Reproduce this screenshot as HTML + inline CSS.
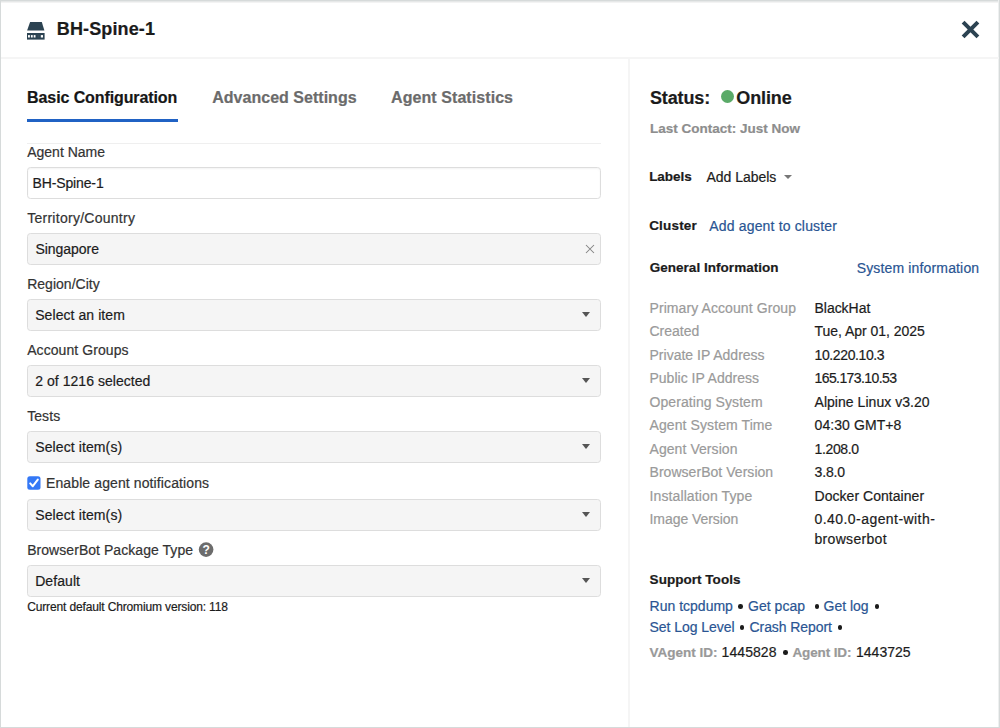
<!DOCTYPE html>
<html><head><meta charset="utf-8"><title>BH-Spine-1</title>
<style>
html,body{margin:0;padding:0;background:#fff;}
body{width:1000px;height:728px;position:relative;overflow:hidden;font-family:"Liberation Sans",sans-serif;}
.t{position:absolute;white-space:nowrap;-webkit-text-stroke:0.2px currentColor;}
</style></head><body>
<div style="position:absolute;left:0;top:0;width:1000px;height:1px;background:#d6dada"></div>
<div style="position:absolute;left:0;top:1px;width:1000px;height:1px;background:#e6e8e8"></div>
<div style="position:absolute;left:0;top:2px;width:1000px;height:1px;background:#f3f3f3"></div>
<div style="position:absolute;left:0;top:0;width:1px;height:728px;background:#d6dada"></div>
<div style="position:absolute;left:999px;top:0;width:1px;height:728px;background:#d6dada"></div>
<div style="position:absolute;left:998px;top:0;width:1px;height:728px;background:#eef0f0"></div>
<div style="position:absolute;left:0;top:727px;width:1000px;height:1px;background:#d6dada"></div>
<div style="position:absolute;left:1px;top:57px;width:998px;height:2px;background:#f5f5f5"></div>
<div style="position:absolute;left:628px;top:59px;width:2px;height:668px;background:#f5f5f5"></div>
<svg style="position:absolute;left:24px;top:18px" width="24" height="24" viewBox="0 0 24 24">
<path d="M6.1 4 H17.8 L20.4 12.5 H3.1 Z" fill="#2c4352"/>
<rect x="3" y="15" width="17.6" height="6.6" fill="#2c4352"/>
<rect x="4" y="17.1" width="1.9" height="2.4" fill="#fff"/><rect x="6.9" y="17.1" width="1.8" height="2.4" fill="#fff"/><rect x="9.7" y="17.1" width="1.8" height="2.4" fill="#fff"/>
<rect x="13.5" y="17.1" width="2" height="2.4" fill="#fff" opacity="0.06"/>
<rect x="16.8" y="17.1" width="2.2" height="2.4" fill="#fff"/>
</svg>
<div class="t" style="left:56.75px;top:17.00px;font-size:18px;line-height:25px;color:#1b1b1b;font-weight:bold;letter-spacing:0.139px;">BH-Spine-1</div>
<svg style="position:absolute;left:961px;top:20px" width="19" height="19" viewBox="0 0 19 19">
<path d="M2.1 2.1 L16.9 16.9 M16.9 2.1 L2.1 16.9" stroke="#2c4352" stroke-width="4" stroke-linecap="butt"/>
</svg>
<div class="t" style="left:27.10px;top:87.00px;font-size:16px;line-height:22px;color:#161616;font-weight:bold;letter-spacing:-0.100px;">Basic Configuration</div>
<div class="t" style="left:212.20px;top:87.00px;font-size:16px;line-height:22px;color:#6b6b6b;font-weight:bold;letter-spacing:0.025px;">Advanced Settings</div>
<div class="t" style="left:391.10px;top:87.00px;font-size:16px;line-height:22px;color:#6b6b6b;font-weight:bold;letter-spacing:0.067px;">Agent Statistics</div>
<div style="position:absolute;left:27px;top:119px;width:151px;height:3px;background:#2062c4"></div>
<div style="position:absolute;left:27px;top:143px;width:574px;height:1px;background:#efefef"></div>
<div class="t" style="left:27.20px;top:142.00px;font-size:14px;line-height:20px;color:#333;">Agent Name</div>
<div style="position:absolute;left:27px;top:167px;width:572px;height:29.5px;border:1px solid #dddddd;border-radius:3.5px;background:#fff;box-shadow:inset 0 1px 2px rgba(0,0,0,0.05);"></div>
<div class="t" style="left:32.60px;top:173.00px;font-size:14px;line-height:20px;color:#1c1c1c;letter-spacing:-0.144px;">BH-Spine-1</div>
<div class="t" style="left:27.20px;top:208.00px;font-size:14px;line-height:20px;color:#333;letter-spacing:0.269px;">Territory/Country</div>
<div style="position:absolute;left:27px;top:233px;width:572px;height:29.5px;border:1px solid #dddddd;border-radius:3.5px;background:#f5f5f5;"></div>
<svg style="position:absolute;left:585px;top:244px" width="10" height="10" viewBox="0 0 10 10"><path d="M1 1 L9 9 M9 1 L1 9" stroke="#808080" stroke-width="1.05"/></svg>
<div class="t" style="left:35.50px;top:239.00px;font-size:14px;line-height:20px;color:#1c1c1c;letter-spacing:-0.050px;">Singapore</div>
<div class="t" style="left:27.20px;top:274.00px;font-size:14px;line-height:20px;color:#333;letter-spacing:0.020px;">Region/City</div>
<div style="position:absolute;left:27px;top:299px;width:572px;height:29.5px;border:1px solid #dddddd;border-radius:3.5px;background:#f5f5f5;"></div>
<div style="position:absolute;left:582px;top:312px;width:0;height:0;border-left:4.5px solid transparent;border-right:4.5px solid transparent;border-top:5px solid #555"></div>
<div class="t" style="left:35.20px;top:305.00px;font-size:14px;line-height:20px;color:#1c1c1c;letter-spacing:0.069px;">Select an item</div>
<div class="t" style="left:27.20px;top:340.00px;font-size:14px;line-height:20px;color:#333;letter-spacing:0.077px;">Account Groups</div>
<div style="position:absolute;left:27px;top:365px;width:572px;height:29.5px;border:1px solid #dddddd;border-radius:3.5px;background:#f5f5f5;"></div>
<div style="position:absolute;left:582px;top:378px;width:0;height:0;border-left:4.5px solid transparent;border-right:4.5px solid transparent;border-top:5px solid #555"></div>
<div class="t" style="left:35.20px;top:371.00px;font-size:14px;line-height:20px;color:#1c1c1c;letter-spacing:0.047px;">2 of 1216 selected</div>
<div class="t" style="left:27.20px;top:406.00px;font-size:14px;line-height:20px;color:#333;letter-spacing:0.075px;">Tests</div>
<div style="position:absolute;left:27px;top:431px;width:572px;height:29.5px;border:1px solid #dddddd;border-radius:3.5px;background:#f5f5f5;"></div>
<div style="position:absolute;left:582px;top:444px;width:0;height:0;border-left:4.5px solid transparent;border-right:4.5px solid transparent;border-top:5px solid #555"></div>
<div class="t" style="left:35.20px;top:437.00px;font-size:14px;line-height:20px;color:#1c1c1c;letter-spacing:0.108px;">Select item(s)</div>
<svg style="position:absolute;left:27px;top:476px" width="14" height="14" viewBox="0 0 14 14"><rect x="0.3" y="0.3" width="13.2" height="13.4" rx="2.5" fill="#3478f6"/><path d="M3.2 7.4 L5.8 10.2 L10.8 3.6" stroke="#fff" stroke-width="2" fill="none" stroke-linecap="round" stroke-linejoin="round"/></svg>
<div class="t" style="left:46.00px;top:473.00px;font-size:14px;line-height:20px;color:#333;letter-spacing:0.108px;">Enable agent notifications</div>
<div style="position:absolute;left:27px;top:499px;width:572px;height:29.5px;border:1px solid #dddddd;border-radius:3.5px;background:#f5f5f5;"></div>
<div style="position:absolute;left:582px;top:512px;width:0;height:0;border-left:4.5px solid transparent;border-right:4.5px solid transparent;border-top:5px solid #555"></div>
<div class="t" style="left:35.20px;top:505.00px;font-size:14px;line-height:20px;color:#1c1c1c;letter-spacing:0.108px;">Select item(s)</div>
<div class="t" style="left:27.20px;top:540.00px;font-size:14px;line-height:20px;color:#333;letter-spacing:0.050px;">BrowserBot Package Type</div>
<svg style="position:absolute;left:198px;top:541px" width="16" height="17" viewBox="0 0 16 17"><circle cx="8.1" cy="8.6" r="7.3" fill="#6c6c6c"/><text x="8.1" y="12.8" text-anchor="middle" font-family="Liberation Sans" font-weight="bold" font-size="12" fill="#fff">?</text></svg>
<div style="position:absolute;left:27px;top:565px;width:572px;height:29.5px;border:1px solid #dddddd;border-radius:3.5px;background:#f5f5f5;"></div>
<div style="position:absolute;left:582px;top:578px;width:0;height:0;border-left:4.5px solid transparent;border-right:4.5px solid transparent;border-top:5px solid #555"></div>
<div class="t" style="left:35.20px;top:571.00px;font-size:14px;line-height:20px;color:#1c1c1c;letter-spacing:0.067px;">Default</div>
<div class="t" style="left:27.20px;top:599.00px;font-size:12px;line-height:17px;color:#1c1c1c;letter-spacing:-0.142px;">Current default Chromium version: 118</div>
<div class="t" style="left:649.90px;top:86.00px;font-size:18px;line-height:25px;color:#1b1b1b;font-weight:bold;letter-spacing:-0.117px;">Status:</div>
<div style="position:absolute;left:721px;top:89.8px;width:13px;height:13px;border-radius:50%;background:#5aaa68"></div>
<div class="t" style="left:736.30px;top:86.00px;font-size:18px;line-height:25px;color:#1b1b1b;font-weight:bold;letter-spacing:-0.120px;">Online</div>
<div class="t" style="left:649.90px;top:119.00px;font-size:13.5px;line-height:19px;color:#8d8d8d;font-weight:bold;">Last Contact: Just Now</div>
<div class="t" style="left:649.20px;top:167.00px;font-size:13.5px;line-height:19px;color:#1b1b1b;font-weight:bold;letter-spacing:-0.060px;">Labels</div>
<div class="t" style="left:706.40px;top:167.00px;font-size:14px;line-height:20px;color:#1c1c1c;letter-spacing:-0.011px;">Add Labels</div>
<div style="position:absolute;left:783.5px;top:174.5px;width:0;height:0;border-left:4.5px solid transparent;border-right:4.5px solid transparent;border-top:4.5px solid #777"></div>
<div class="t" style="left:649.20px;top:216.00px;font-size:13.5px;line-height:19px;color:#1b1b1b;font-weight:bold;letter-spacing:0.183px;">Cluster</div>
<div class="t" style="left:709.30px;top:216.00px;font-size:14px;line-height:20px;color:#2a5593;letter-spacing:0.163px;">Add agent to cluster</div>
<div class="t" style="left:649.70px;top:258.00px;font-size:13.5px;line-height:19px;color:#1b1b1b;font-weight:bold;letter-spacing:0.033px;">General Information</div>
<div class="t" style="left:856.70px;top:258.00px;font-size:14px;line-height:20px;color:#2a5593;letter-spacing:0.153px;">System information</div>
<div class="t" style="left:649.50px;top:298.00px;font-size:14px;line-height:20px;color:#9a9a9a;letter-spacing:0.085px;">Primary Account Group</div>
<div class="t" style="left:814.50px;top:298.00px;font-size:14px;line-height:20px;color:#1c1c1c;letter-spacing:-0.029px;">BlackHat</div>
<div class="t" style="left:649.50px;top:321.00px;font-size:14px;line-height:20px;color:#9a9a9a;">Created</div>
<div class="t" style="left:814.50px;top:321.00px;font-size:14px;line-height:20px;color:#1c1c1c;letter-spacing:-0.031px;">Tue, Apr 01, 2025</div>
<div class="t" style="left:649.50px;top:345.00px;font-size:14px;line-height:20px;color:#9a9a9a;letter-spacing:0.012px;">Private IP Address</div>
<div class="t" style="left:814.50px;top:345.00px;font-size:14px;line-height:20px;color:#1c1c1c;letter-spacing:-0.380px;">10.220.10.3</div>
<div class="t" style="left:649.50px;top:368.00px;font-size:14px;line-height:20px;color:#9a9a9a;">Public IP Address</div>
<div class="t" style="left:814.50px;top:368.00px;font-size:14px;line-height:20px;color:#1c1c1c;letter-spacing:-0.583px;">165.173.10.53</div>
<div class="t" style="left:649.50px;top:392.00px;font-size:14px;line-height:20px;color:#9a9a9a;letter-spacing:0.073px;">Operating System</div>
<div class="t" style="left:814.50px;top:392.00px;font-size:14px;line-height:20px;color:#1c1c1c;letter-spacing:0.041px;">Alpine Linux v3.20</div>
<div class="t" style="left:649.50px;top:415.00px;font-size:14px;line-height:20px;color:#9a9a9a;letter-spacing:0.094px;">Agent System Time</div>
<div class="t" style="left:814.50px;top:415.00px;font-size:14px;line-height:20px;color:#1c1c1c;letter-spacing:0.090px;">04:30 GMT+8</div>
<div class="t" style="left:649.50px;top:439.00px;font-size:14px;line-height:20px;color:#9a9a9a;letter-spacing:0.067px;">Agent Version</div>
<div class="t" style="left:814.50px;top:439.00px;font-size:14px;line-height:20px;color:#1c1c1c;letter-spacing:-0.350px;">1.208.0</div>
<div class="t" style="left:649.50px;top:462.00px;font-size:14px;line-height:20px;color:#9a9a9a;letter-spacing:0.041px;">BrowserBot Version</div>
<div class="t" style="left:814.50px;top:462.00px;font-size:14px;line-height:20px;color:#1c1c1c;letter-spacing:-0.150px;">3.8.0</div>
<div class="t" style="left:649.50px;top:486.00px;font-size:14px;line-height:20px;color:#9a9a9a;letter-spacing:0.113px;">Installation Type</div>
<div class="t" style="left:814.50px;top:486.00px;font-size:14px;line-height:20px;color:#1c1c1c;letter-spacing:0.040px;">Docker Container</div>
<div class="t" style="left:649.50px;top:509.00px;font-size:14px;line-height:20px;color:#9a9a9a;letter-spacing:-0.050px;">Image Version</div>
<div class="t" style="left:814.50px;top:509.00px;font-size:14px;line-height:20px;color:#1c1c1c;letter-spacing:0.441px;">0.40.0-agent-with-</div>
<div class="t" style="left:814.50px;top:529.00px;font-size:14px;line-height:20px;color:#1c1c1c;letter-spacing:0.311px;">browserbot</div>
<div class="t" style="left:649.60px;top:570.00px;font-size:13.5px;line-height:19px;color:#1b1b1b;font-weight:bold;letter-spacing:0.033px;">Support Tools</div>
<div class="t" style="left:649.60px;top:596.00px;font-size:14px;line-height:20px;color:#2a5593;">Run tcpdump</div>
<div class="t" style="left:748.00px;top:596.00px;font-size:14px;line-height:20px;color:#2a5593;letter-spacing:0.029px;">Get pcap</div>
<div class="t" style="left:823.60px;top:596.00px;font-size:14px;line-height:20px;color:#2a5593;letter-spacing:-0.017px;">Get log</div>
<div class="t" style="left:649.60px;top:617.00px;font-size:14px;line-height:20px;color:#2a5593;letter-spacing:-0.058px;">Set Log Level</div>
<div class="t" style="left:749.50px;top:617.00px;font-size:14px;line-height:20px;color:#2a5593;letter-spacing:-0.073px;">Crash Report</div>
<div style="position:absolute;left:738.3px;top:604.2px;width:4.6px;height:4.6px;border-radius:50%;background:#1b1b1b"></div>
<div style="position:absolute;left:814.7px;top:604.2px;width:4.6px;height:4.6px;border-radius:50%;background:#1b1b1b"></div>
<div style="position:absolute;left:874.7px;top:604.2px;width:4.6px;height:4.6px;border-radius:50%;background:#1b1b1b"></div>
<div style="position:absolute;left:739.7px;top:625.2px;width:4.6px;height:4.6px;border-radius:50%;background:#1b1b1b"></div>
<div style="position:absolute;left:837.7px;top:625.2px;width:4.6px;height:4.6px;border-radius:50%;background:#1b1b1b"></div>
<div class="t" style="left:649.60px;top:643.00px;font-size:13.5px;line-height:19px;color:#999;font-weight:bold;letter-spacing:-0.022px;">VAgent ID:</div>
<div class="t" style="left:721.60px;top:642.00px;font-size:14px;line-height:20px;color:#1c1c1c;letter-spacing:0.067px;">1445828</div>
<div style="position:absolute;left:783.2px;top:650.2px;width:4.6px;height:4.6px;border-radius:50%;background:#1b1b1b"></div>
<div class="t" style="left:792.40px;top:643.00px;font-size:13.5px;line-height:19px;color:#999;font-weight:bold;letter-spacing:-0.112px;">Agent ID:</div>
<div class="t" style="left:856.00px;top:642.00px;font-size:14px;line-height:20px;color:#1c1c1c;letter-spacing:0.017px;">1443725</div>
</body></html>
